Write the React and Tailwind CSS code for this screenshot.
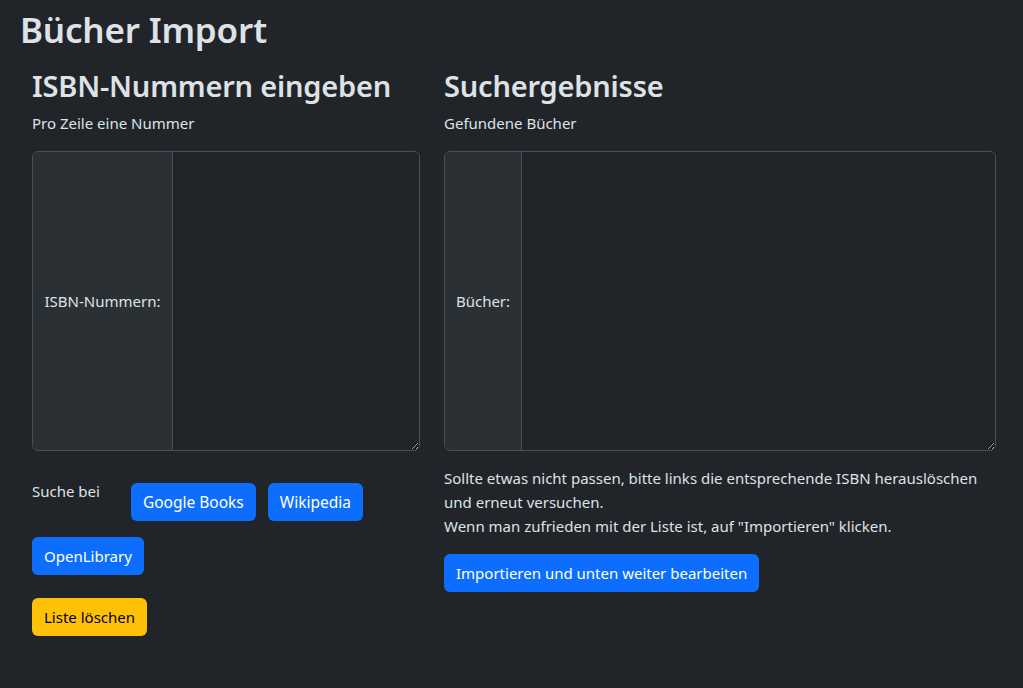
import React from "react";

const font = { fontFamily: '"Noto Sans", "Open Sans", sans-serif' };

function Btn({ children, className = "" }) {
  return (
    <button
      className={
        "h-[38px] px-3 rounded-[6px] leading-[24px] " + className
      }
    >
      {children}
    </button>
  );
}

function InputGroup({ label, labelW }) {
  return (
    <div className="flex h-[300px] border border-[#495057] rounded-[6px] overflow-hidden">
      <div
        className={
          "flex items-center justify-center bg-[#2b3035] border-r border-[#495057] text-[15px] text-[#dee2e6] " +
          labelW
        }
      >
        {label}
      </div>
      <textarea className="flex-1 bg-[#212529] resize-y outline-none [color-scheme:dark] p-2 text-[#dee2e6]" />
    </div>
  );
}

export default function App() {
  return (
    <div
      className="min-h-[688px] bg-[#212529] text-[#dee2e6] pl-5 overflow-hidden"
      style={font}
    >
      <h1 className="pt-[8px] text-[35px] leading-[44px] font-semibold tracking-[-0.2px]">
        Bücher Import
      </h1>
      <div className="flex gap-6 px-3 mt-[16px]">
        <div className="w-[388px] shrink-0 flex flex-col">
          <h2 className="text-[29px] leading-[36px] font-semibold tracking-[-0.2px]">
            ISBN-Nummern eingeben
          </h2>
          <p className="text-[15px] leading-[24px] mt-[7px]">
            Pro Zeile eine Nummer
          </p>
          <div className="mt-[16px]">
            <InputGroup label="ISBN-Nummern:" labelW="w-[140px]" />
          </div>
          <div className="flex flex-wrap items-start gap-x-3 gap-y-[12px] mt-[28px]">
            <span className="text-[15px] leading-[24px] mr-[19px]">Suche bei</span>
            <Btn className="mt-1 bg-[#0d6efd] text-white text-[15.5px]">Google Books</Btn>
            <Btn className="mt-1 bg-[#0d6efd] text-white text-[15.5px]">Wikipedia</Btn>
            <Btn className="mt-1 bg-[#0d6efd] text-white text-[15px]">OpenLibrary</Btn>
          </div>
          <div className="mt-[23px]">
            <Btn className="bg-[#ffc107] text-black text-[15px]">Liste löschen</Btn>
          </div>
        </div>
        <div className="w-[552px] shrink-0 flex flex-col">
          <h2 className="text-[29px] leading-[36px] font-semibold tracking-[-0.2px]">
            Suchergebnisse
          </h2>
          <p className="text-[15px] leading-[24px] mt-[7px]">Gefundene Bücher</p>
          <div className="mt-[16px]">
            <InputGroup label="Bücher:" labelW="w-[77px]" />
          </div>
          <p className="text-[15px] leading-[24px] mt-[15px]">
            Sollte etwas nicht passen, bitte links die entsprechende ISBN herauslöschen
            und erneut versuchen.
            <br />
            Wenn man zufrieden mit der Liste ist, auf "Importieren" klicken.
          </p>
          <div className="mt-[16px]">
            <Btn className="bg-[#0d6efd] text-white text-[15px]">
              Importieren und unten weiter bearbeiten
            </Btn>
          </div>
        </div>
      </div>
    </div>
  );
}
